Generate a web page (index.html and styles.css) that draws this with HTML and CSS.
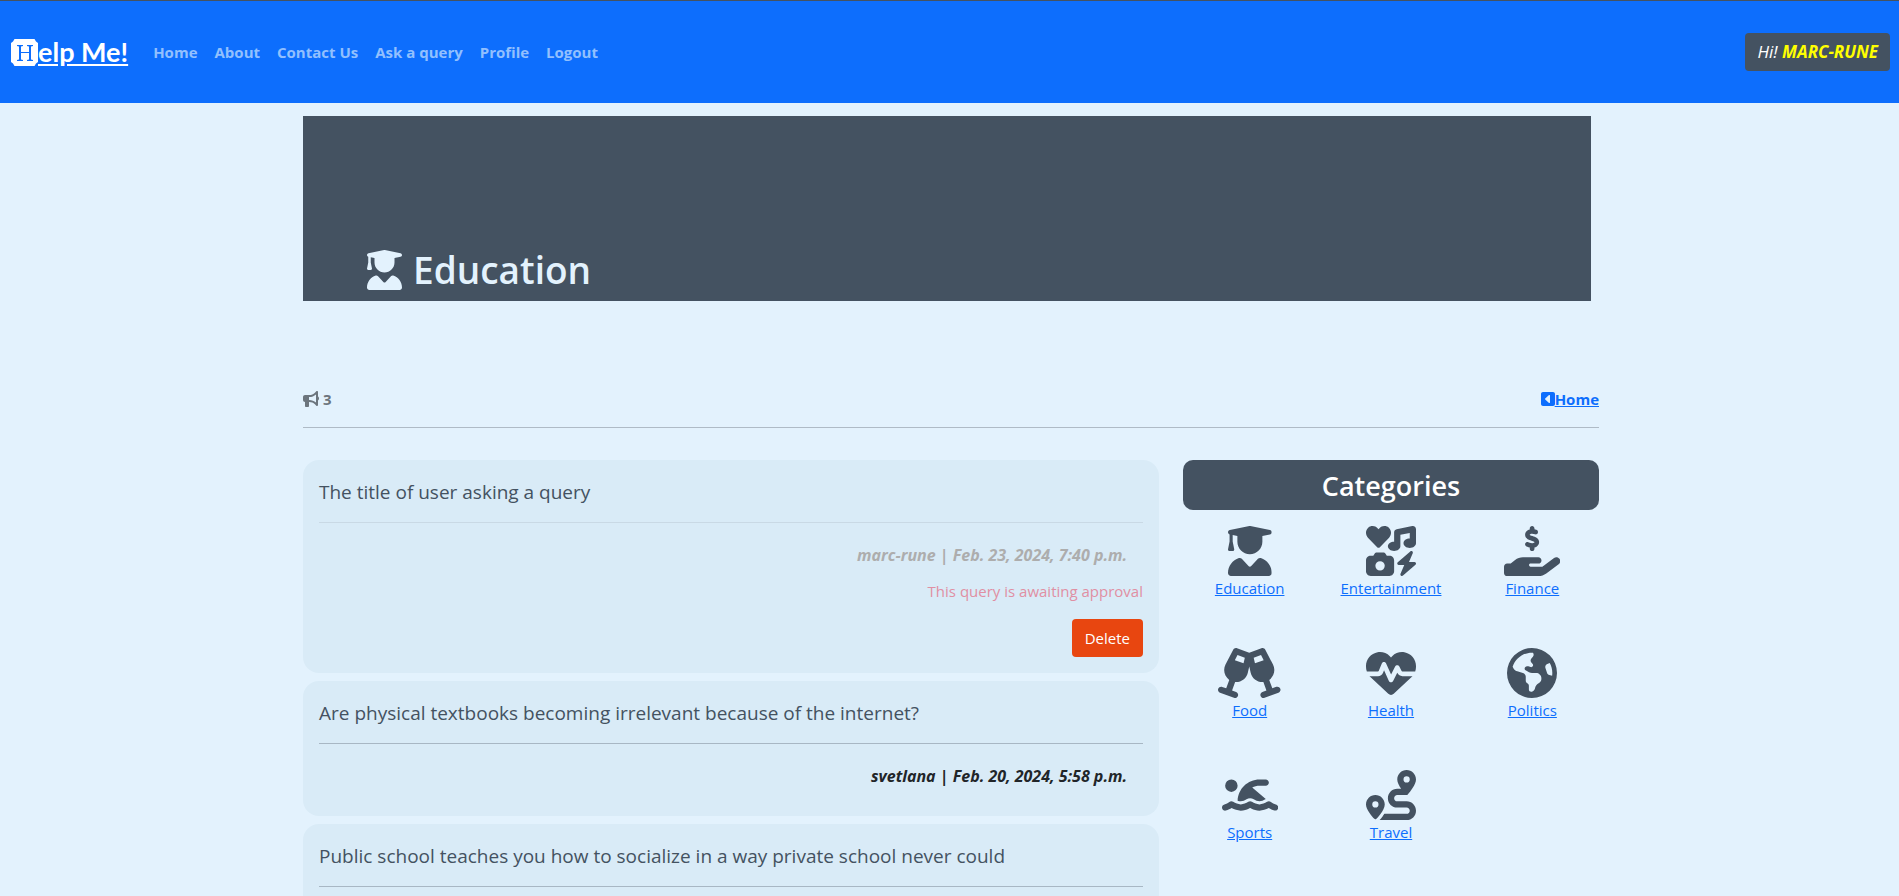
FILE: index.html
```html
<!DOCTYPE html>
<html lang="en">
<head>
<meta charset="utf-8">
<meta name="viewport" content="width=device-width, initial-scale=1">
<title>Help Me! - Education</title>
<link rel="stylesheet" href="styles.css">
</head>
<body>
<svg class="sprite" aria-hidden="true">
  <symbol id="graduate" viewBox="0 0 448 512"><path d="M219.3 .5c3.1-.6 6.3-.6 9.4 0l200 40C439.9 42.7 448 52.6 448 64s-8.1 21.3-19.3 23.5L352 102.9V160c0 70.7-57.3 128-128 128s-128-57.3-128-128V102.9L48 93.3v65.1l15.7 78.4c.9 4.7-.3 9.6-3.3 13.3s-7.6 5.9-12.4 5.9H16c-4.8 0-9.3-2.1-12.4-5.9s-4.3-8.6-3.3-13.3L16 158.4V86.6C6.5 83.3 0 74.3 0 64C0 52.6 8.1 42.7 19.3 40.5l200-40zM111.9 327.7c10.5-3.4 21.8 .4 29.4 8.5l71 75.5c6.3 6.7 17 6.7 23.3 0l71-75.5c7.6-8.1 18.9-11.9 29.4-8.5C401 348.6 448 409.4 448 481.3c0 17-13.8 30.7-30.7 30.7H30.7C13.8 512 0 498.2 0 481.3c0-71.9 47-132.7 111.9-153.6z"/></symbol>
</svg>
<header class="navbar">
  <a class="brand" href="#"><svg class="brand-icon" viewBox="0 0 27 27" aria-hidden="true"><path class="brand-plate" d="M3.500 0H23.500L25 2.500L27 4V23L25 24.500L23.500 27H3.500L2 24.500L0 23V4L2 2.500Z"/><path class="brand-mark" d="M6 6h6v1l-2 .5V13h8V7.500L16 7V6h6v1l-2 .5v13l2 .5v1h-6v-1l2-.5V14h-8v6.500l2 .5v1H6v-1l2-.5v-13L6 7Z"/></svg><span>elp Me!</span></a>
  <nav class="links">
    <a href="#">Home</a>
    <a href="#">About</a>
    <a href="#">Contact Us</a>
    <a href="#">Ask a query</a>
    <a href="#">Profile</a>
    <a href="#">Logout</a>
  </nav>
  <p class="greeting">Hi! <strong>MARC-RUNE</strong></p>
</header>
<main class="page">
  <div class="banner">
    <h1><svg class="banner-icon" viewBox="0 0 448 512" aria-hidden="true"><use href="#graduate"/></svg>Education</h1>
  </div>
  <div class="toolbar">
    <p class="count"><svg class="small-icon" viewBox="0 0 512 512" aria-hidden="true"><path d="M480 32c0-12.900-7.800-24.600-19.800-29.600s-25.700-2.200-34.900 6.900L381.700 53c-48 48-113.100 75-181 75H192 160 64c-35.300 0-64 28.700-64 64v96c0 35.300 28.700 64 64 64l0 128c0 17.700 14.300 32 32 32h64c17.700 0 32-14.300 32-32V352l8.700 0c67.900 0 133 27 181 75l43.600 43.600c9.200 9.200 22.900 11.900 34.900 6.900s19.800-16.600 19.800-29.600V300.400c18.600-8.800 32-32.500 32-60.400s-13.400-51.600-32-60.400V32zm-64 76.700V240 371.300C357.200 317.800 280.500 288 200.700 288H192V192h8.700c79.800 0 156.500-29.800 215.300-83.300z"/></svg>3</p>
    <a class="back" href="#"><svg class="back-icon" viewBox="0 0 448 512" aria-hidden="true"><path fill-rule="evenodd" d="M0 416c0 35.300 28.700 64 64 64H384c35.300 0 64-28.700 64-64V96c0-35.300-28.700-64-64-64H64C28.700 32 0 60.700 0 96V416zM128 256c0-6.700 2.800-13 7.700-17.600l112-104c7-6.500 17.200-8.200 25.900-4.400s14.400 12.500 14.400 22V360c0 9.500-5.700 18.200-14.400 22s-18.900 2.100-25.900-4.400l-112-104c-4.900-4.500-7.700-10.900-7.700-17.600z"/></svg><span>Home</span></a>
  </div>
  <div class="columns">
    <section class="queries">
      <article class="card pending">
        <h2>The title of user asking a query</h2>
        <hr>
        <p class="meta">marc-rune | Feb. 23, 2024, 7:40 p.m.</p>
        <p class="notice">This query is awaiting approval</p>
        <button class="delete" type="button">Delete</button>
      </article>
      <article class="card">
        <h2>Are physical textbooks becoming irrelevant because of the internet?</h2>
        <hr>
        <p class="meta">svetlana | Feb. 20, 2024, 5:58 p.m.</p>
      </article>
      <article class="card">
        <h2>Public school teaches you how to socialize in a way private school never could</h2>
        <hr>
      </article>
    </section>
    <aside class="sidebar">
      <h2>Categories</h2>
      <div class="categories">
        <div class="category"><svg viewBox="0 0 448 512" aria-hidden="true"><use href="#graduate"/></svg><a href="#">Education</a></div>
        <div class="category"><svg viewBox="0 0 512 512" aria-hidden="true"><path d="M500.300 7.300C507.700 13.300 512 22.400 512 32V176c0 26.500-28.700 48-64 48s-64-21.500-64-48s28.700-48 64-48V71L352 90.200V208c0 26.500-28.700 48-64 48s-64-21.500-64-48s28.700-48 64-48V64c0-15.300 10.800-28.400 25.700-31.400l160-32c9.400-1.900 19.100 .6 26.600 6.600zM74.700 304l11.800-17.800c5.900-8.900 15.900-14.200 26.600-14.200h61.700c10.700 0 20.700 5.300 26.600 14.200L213.300 304H240c26.500 0 48 21.500 48 48V464c0 26.500-21.500 48-48 48H48c-26.500 0-48-21.500-48-48V352c0-26.500 21.500-48 48-48H74.700zM192 408a48 48 0 1 0 -96 0 48 48 0 1 0 96 0zM478.700 278.300L440.300 368H496c6.700 0 12.600 4.100 15 10.400s.6 13.300-4.400 17.700l-128 112c-5.600 4.900-13.900 5.300-19.900 .9s-8.200-12.400-5.300-19.200L391.700 400H336c-6.700 0-12.600-4.100-15-10.400s-.6-13.300 4.400-17.700l128-112c5.600-4.900 13.900-5.300 19.900-.9s8.200 12.400 5.300 19.200zm-339-59.200c-6.500 6.500-17 6.500-23 0L19.900 119.200c-28-29-26.500-76.900 5-103.900c27-23.500 68.400-19 93.400 6.500l10 10.500 9.500-10.500c25-25.500 65.900-30 93.900-6.500c31 27 32.500 74.900 4.500 103.900l-96.400 99.900z"/></svg><a href="#">Entertainment</a></div>
        <div class="category"><svg viewBox="0 0 576 512" aria-hidden="true"><path d="M312 24V34.500c6.400 1.200 12.600 2.700 18.200 4.200c12.800 3.400 20.400 16.600 17 29.400s-16.600 20.400-29.400 17c-10.900-2.900-21.100-4.900-30.200-5c-7.300-.1-14.700 1.700-19.400 4.400c-2.100 1.300-3.100 2.400-3.500 3c-.3 .5-.7 1.200-.7 2.800c0 .3 0 .5 0 .6c.2 .2 .9 1.200 3.300 2.600c5.800 3.500 14.400 6.200 27.400 10.100l.9 .3c11.100 3.300 25.900 7.800 37.900 15.300c13.700 8.600 26.100 22.900 26.400 44.900c.3 22.500-11.400 38.900-26.700 48.500c-6.700 4.100-13.900 7-21.300 8.800V232c0 13.300-10.700 24-24 24s-24-10.700-24-24V220.600c-9.500-2.300-18.200-5.300-25.600-7.800c-2.100-.7-4.100-1.400-6-2c-12.600-4.200-19.400-17.800-15.200-30.400s17.800-19.400 30.400-15.200c2.600 .9 5 1.700 7.300 2.500c13.600 4.600 23.400 7.900 33.900 8.300c8 .3 15.100-1.600 19.200-4.100c1.900-1.200 2.800-2.200 3.200-2.900c.4-.6 .9-1.800 .8-4.100l0-.2c0-1 0-2.100-4-4.600c-5.700-3.600-14.300-6.400-27.100-10.300l-1.900-.6c-10.800-3.200-25-7.500-36.400-14.400c-13.500-8.100-26.500-22-26.600-44.100c-.1-22.900 12.900-38.600 27.700-47.400c6.400-3.800 13.300-6.400 20.200-8.200V24c0-13.300 10.700-24 24-24s24 10.700 24 24zM568.200 336.300c13.100 17.800 9.300 42.800-8.500 55.900L433.100 485.500c-23.400 17.200-51.600 26.500-80.700 26.500H192 32c-17.700 0-32-14.300-32-32V416c0-17.700 14.300-32 32-32H68.800l44.900-36c22.700-18.200 50.900-28 80-28H272h16 64c17.700 0 32 14.300 32 32s-14.300 32-32 32H288 272c-8.800 0-16 7.200-16 16s7.200 16 16 16H392.600l119.700-88.200c17.800-13.100 42.800-9.300 55.900 8.500z"/></svg><a href="#">Finance</a></div>
        <div class="category"><svg viewBox="0 0 640 512" aria-hidden="true"><path d="M155.600 17.300C163 3 179.900-3.600 195 1.900L320 47.500l125-45.600c15.100-5.500 32 1.100 39.400 15.400l78.800 152.900c28.800 55.800 10.300 122.300-38.500 156.600L556.100 413l41-15c16.600-6 35 2.500 41 19.100s-2.500 35-19.100 41l-71.100 25.900L476.800 510c-16.600 6.100-35-2.500-41-19.100s2.500-35 19.100-41l41-15-31.300-86.200c-59.400 5.200-116.200-34-130-95.200L320 188.800l-14.600 64.700c-13.800 61.300-70.600 100.400-130 95.200l-31.300 86.200 41 15c16.600 6 25.200 24.400 19.100 41s-24.400 25.200-41 19.100L92.200 484.100 21.100 458.200c-16.600-6.100-25.200-24.400-19.100-41s24.400-25.200 41-19.100l41 15 31.300-86.200C66.500 292.500 48.100 226 76.900 170.200L155.600 17.300zm44 54.400l-27.200 52.800L261.600 157l13.100-57.900L199.600 71.700zm240.900 0L365.400 99.100 378.500 157l89.200-32.500L440.500 71.700z"/></svg><a href="#">Food</a></div>
        <div class="category"><svg viewBox="0 0 512 512" aria-hidden="true"><path d="M228.300 469.100L47.600 300.400c-4.200-3.900-8.200-8.100-11.900-12.400h87c22.600 0 43-13.600 51.700-34.500l10.500-25.200 49.300 109.500c3.800 8.500 12.100 14 21.400 14.100s17.800-5 22-13.300L320 253.700l1.700 3.400c9.500 19 28.900 31 50.100 31H476.300c-3.700 4.300-7.700 8.500-11.900 12.400L283.700 469.100c-7.500 7-17.400 10.900-27.700 10.900s-20.200-3.900-27.700-10.900zM503.700 240h-132c-3 0-5.800-1.700-7.200-4.400l-23.200-46.300c-4.100-8.100-12.400-13.300-21.500-13.300s-17.400 5.100-21.500 13.300l-41.400 82.800L205.900 158.200c-3.900-8.700-12.700-14.300-22.200-14.100s-18.100 5.900-21.800 14.800l-31.800 76.300c-1.200 3-4.200 4.900-7.400 4.900H16c-2.600 0-5 .4-7.300 1.100C3 225.200 0 208.200 0 190.900v-5.800c0-69.900 50.500-129.500 119.400-141C165 36.500 211.400 51.400 244 84l12 12 12-12c32.600-32.600 79-47.500 124.600-39.900C461.500 55.600 512 115.200 512 185.100v5.800c0 16.900-2.800 33.500-8.300 49.100z"/></svg><a href="#">Health</a></div>
        <div class="category"><svg viewBox="0 0 512 512" aria-hidden="true"><path fill-rule="evenodd" d="M57.700 193l9.400 16.400c8.300 14.500 21.900 25.200 38 29.800L163 255.700c17.200 4.900 29 20.600 29 38.500v39.900c0 11 6.200 21 16 25.900s16 14.900 16 25.900v39c0 15.600 14.900 26.900 29.900 22.600c16.100-4.600 28.600-17.500 32.700-33.800l2.800-11.200c4.200-16.900 15.200-31.400 30.300-40l8.100-4.600c15-8.500 24.200-24.500 24.200-41.700v-8.300c0-12.700-5.100-24.900-14.100-33.900l-3.900-3.900c-9-9-21.200-14.100-33.900-14.100H257c-11.100 0-22.100-2.900-31.800-8.400l-34.500-19.700c-4.300-2.500-7.600-6.500-9.200-11.200c-3.200-9.600 1.100-20 10.200-24.500l5.900-3c6.600-3.300 14.300-3.900 21.300-1.500l23.200 7.700c8.200 2.700 17.200-.4 21.900-7.500c4.700-7 4.200-16.300-1.200-22.800l-13.600-16.300c-10-12-9.900-29.500 .3-41.300l15.700-18.300c8.800-10.300 10.200-25 3.500-36.700l-2.400-4.200c-3.500-.2-6.900-.3-10.400-.3C163.100 48 84.400 108.900 57.700 193zM464 256c0-36.800-9.600-71.400-26.400-101.500L412 164.800c-15.700 6.300-23.800 23.800-18.500 39.800l16.900 50.700c3.500 10.400 12 18.300 22.600 20.900l29.100 7.300c1.200-9 1.800-18.200 1.800-27.500zM0 256a256 256 0 1 1 512 0A256 256 0 1 1 0 256z"/></svg><a href="#">Politics</a></div>
        <div class="category"><svg viewBox="0 0 576 512" aria-hidden="true"><path d="M309.500 178.400L447.900 297.100c-1.600 .9-3.200 2-4.800 3c-18 12.400-40.100 20.300-59.200 20.300c-19.600 0-40.800-7.700-59.200-20.300c-22.100-15.500-51.600-15.500-73.700 0c-17.100 11.800-38 20.300-59.200 20.300c-10.100 0-21.100-2.200-31.900-6.200C163.100 193.200 262.200 96 384 96h64c17.700 0 32 14.300 32 32s-14.300 32-32 32H384c-26.900 0-52.300 6.600-74.500 18.400zM160 160A64 64 0 1 1 32 160a64 64 0 1 1 128 0zM306.500 325.900C329 341.400 356.500 352 384 352c26.900 0 55.400-10.800 77.400-26.100l0 0c11.900-8.500 28.100-7.800 39.200 1.700c14.400 11.900 32.500 21 50.600 25.200c17.200 4 27.900 21.200 23.900 38.400s-21.200 27.900-38.400 23.900c-24.500-5.700-44.900-16.500-58.200-25C449.500 405.700 417 416 384 416c-31.900 0-60.600-9.900-80.400-18.900c-5.800-2.700-11.100-5.300-15.600-7.700c-4.500 2.400-9.700 5.100-15.600 7.700c-19.800 9-48.500 18.900-80.400 18.900c-33 0-65.500-10.300-94.500-25.800c-13.400 8.400-33.700 19.300-58.200 25c-17.200 4-34.400-6.700-38.400-23.900s6.700-34.400 23.900-38.400c18.100-4.200 36.200-13.300 50.600-25.200c11.100-9.400 27.300-10.100 39.200-1.700l0 0C136.700 341.200 165.100 352 192 352c27.500 0 55-10.600 77.500-26.100c11.100-7.900 25.900-7.900 37 0z"/></svg><a href="#">Sports</a></div>
        <div class="category"><svg viewBox="0 0 512 512" aria-hidden="true"><path fill-rule="evenodd" d="M512 96c0 50.200-59.100 125.100-84.600 155c-3.800 4.400-9.400 6.100-14.500 5H320c-17.700 0-32 14.300-32 32s14.300 32 32 32h96c53 0 96 43 96 96s-43 96-96 96H139.600c8.700-9.900 19.300-22.600 30-36.800c6.300-8.400 12.800-17.600 19-27.200H416c17.700 0 32-14.300 32-32s-14.300-32-32-32H320c-53 0-96-43-96-96s43-96 96-96h39.800c-21-31.500-39.800-67.700-39.800-96c0-53 43-96 96-96s96 43 96 96zM117.100 489.100c-3.800 4.300-7.200 8.100-10.100 11.300l-1.800 2-.2-.2c-6 4.600-14.600 4-20-1.800C59.800 473 0 402.500 0 352c0-53 43-96 96-96s96 43 96 96c0 30-21.100 67-43.500 97.900c-10.700 14.700-21.700 28-30.800 38.500l-.6 .7zM128 352a32 32 0 1 0 -64 0 32 32 0 1 0 64 0zM416 128a32 32 0 1 0 0-64 32 32 0 1 0 0 64z"/></svg><a href="#">Travel</a></div>
      </div>
    </aside>
  </div>
</main>
</body>
</html>
```
FILE: styles.css
```css
* { box-sizing: border-box; }

body {
  margin: 0;
  background: #e3f2fd;
  color: #212529;
  font: 15px/24px "Segoe UI", "Open Sans", "Noto Sans", sans-serif;
}

h1, h2, p { margin: 0; }

a { color: #0d6efd; }

svg { fill: currentColor; }

.sprite { display: none; }

.navbar {
  display: flex;
  align-items: center;
  min-height: 103px;
  padding: 0 9px 0 11px;
  background: #0d6efd;
  border-top: 1px solid #445261;
}

.brand {
  display: flex;
  align-items: center;
  margin-right: 17px;
  color: #fff;
  font: bold 27px/40px Lato, sans-serif;
}

.brand-icon { width: 27px; height: 27px; }

.brand-mark { fill: #0d6efd; }

.links { display: flex; gap: 1px; }

.links a {
  padding: 8px;
  color: #92c0fe;
  font-weight: 700;
  text-decoration: none;
}

.greeting {
  margin-left: auto;
  padding: 7px 12px;
  border-radius: 4px;
  background: #445261;
  color: #fff;
  font-size: 17px;
  font-style: italic;
}

.greeting strong { color: #ff0; }

.page {
  max-width: 1323px;
  margin: 0 auto;
  padding: 13px 12px 0 15px;
}

.banner {
  display: flex;
  align-items: flex-end;
  min-height: 185px;
  margin-right: 8px;
  padding: 0 64px 7px;
  background: #445261;
  color: #e3f2fd;
}

.banner h1 {
  display: flex;
  align-items: center;
  gap: 11px;
  font-size: 37px;
  font-weight: 600;
  line-height: 48px;
}

.banner-icon { width: 35px; height: 40px; }

.toolbar {
  display: flex;
  justify-content: space-between;
  margin-top: 86px;
  padding-bottom: 16px;
  border-bottom: 1px solid #afbbc6;
  font-weight: 700;
}

.count {
  display: flex;
  align-items: center;
  gap: 4px;
  color: #6c757d;
}

.small-icon { width: 16px; height: 16px; }

.back { display: flex; align-items: center; }

.back-icon { width: 14px; height: 16px; }

.columns {
  display: grid;
  grid-template-columns: 856fr 416fr;
  gap: 24px;
  align-items: start;
  margin-top: 32px;
}

.queries { display: grid; gap: 8px; }

.card {
  display: flex;
  flex-direction: column;
  padding: 16px;
  border-radius: 16px;
  background: #d9ebf7;
}

.card h2 {
  color: #445261;
  font-size: 19px;
  font-weight: 400;
  line-height: 32px;
}

.card hr {
  width: 100%;
  margin: 14px 0 16px;
  border: 0;
  border-top: 1px solid #a8b7c4;
}

.meta {
  margin-bottom: 8px;
  padding-right: 16px;
  font-size: 16px;
  font-style: italic;
  font-weight: 700;
  line-height: 32px;
  text-align: right;
}

.pending hr { border-color: #c9d9e5; }

.pending .meta { color: #adadad; }

.notice {
  margin-bottom: 16px;
  color: #e08fa3;
  text-align: right;
}

.delete {
  align-self: flex-end;
  padding: 7px 13px;
  border: 0;
  border-radius: 4px;
  background: #e84610;
  color: #fff;
  font: inherit;
}

.sidebar h2 {
  padding: 9px 8px 7px;
  border-radius: 10px;
  background: #445261;
  color: #fff;
  font-size: 27px;
  font-weight: 600;
  line-height: 34px;
  text-align: center;
}

.categories {
  display: grid;
  grid-template-columns: repeat(3, 1fr);
  row-gap: 48px;
  margin: 16px -4px 0;
}

.category {
  display: flex;
  flex-direction: column;
  align-items: center;
}

.category svg {
  height: 50px;
  color: #445261;
}
```
